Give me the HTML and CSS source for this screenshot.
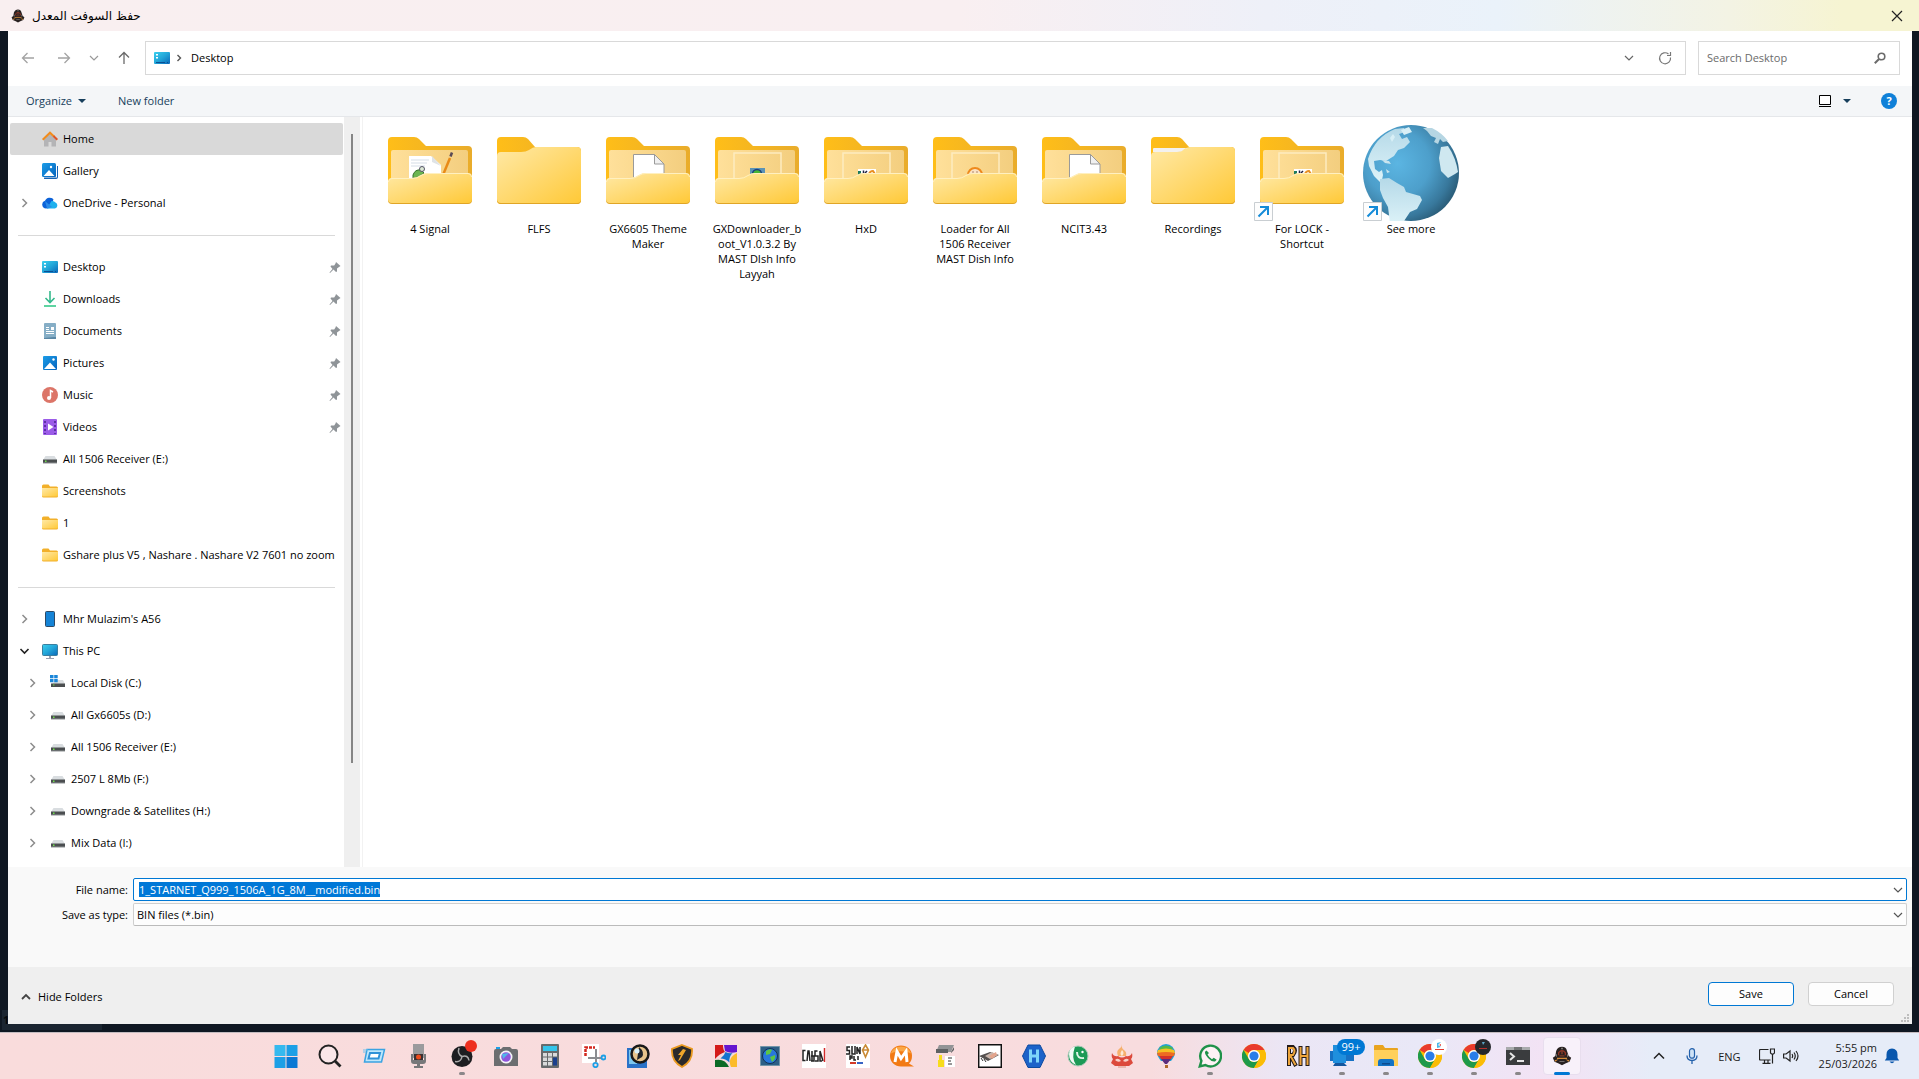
FILE: index.html
```html
<!DOCTYPE html>
<html lang="en">
<head>
<meta charset="utf-8">
<title>حفظ السوفت المعدل</title>
<link rel="stylesheet" href="styles.css">
</head>
<body>
<svg class="defs" aria-hidden="true">
  <defs>
    <linearGradient id="gFront" x1="0" y1="0" x2="1" y2="1"><stop offset="0" stop-color="#ffe9a6"/><stop offset=".5" stop-color="#ffd970"/><stop offset="1" stop-color="#ffc937"/></linearGradient>
    <linearGradient id="gPanel" x1="0" y1="0" x2="1" y2="0"><stop offset="0" stop-color="#ffe09a"/><stop offset="1" stop-color="#f3ce7f"/></linearGradient>
    <linearGradient id="gBack" x1="0" y1="0" x2="1" y2="0"><stop offset="0" stop-color="#ffbe18"/><stop offset="1" stop-color="#e9ac2b"/></linearGradient>
    <linearGradient id="gSky" x1="0" y1="0" x2="1" y2="1"><stop offset="0" stop-color="#3bd0ee"/><stop offset=".5" stop-color="#22a5d8"/><stop offset="1" stop-color="#0a66b8"/></linearGradient>
    <linearGradient id="gBlue" x1="0" y1="0" x2="1" y2="1"><stop offset="0" stop-color="#1b9de8"/><stop offset="1" stop-color="#0663bd"/></linearGradient>
    <radialGradient id="gOcean" cx=".36" cy=".4" r=".75"><stop offset="0" stop-color="#5bb5e2"/><stop offset=".45" stop-color="#4d9fcb"/><stop offset=".75" stop-color="#38789c"/><stop offset="1" stop-color="#20495f"/></radialGradient>
    <linearGradient id="gLand" x1="0" y1="0" x2="0" y2="1"><stop offset="0" stop-color="#b5d9e8"/><stop offset="1" stop-color="#dff4f9"/></linearGradient>
  </defs>
  <symbol id="folder-closed" viewBox="0 0 96 96">
    <path fill="url(#gBack)" d="M6 16q0-4 4-4h22q3 0 5 2l7 8h42q4 0 4 4v49q0 4-4 4H10q-4 0-4-4z"/>
    <path fill="#e0a526" d="M6 60h84v15q0 4-4 4H10q-4 0-4-4z"/>
    <path fill="url(#gFront)" d="M6 31q0-4 4-4h20q5 0 8-2 4-3 7-3h41q4 0 4 4v48q0 4-4 4H10q-4 0-4-4z"/>
  </symbol>
  <symbol id="folder-back" viewBox="0 0 96 96">
    <path fill="url(#gBack)" d="M6 16q0-4 4-4h22q3 0 5 2l7 7h42q4 0 4 4v40H6z"/>
    <path fill="url(#gPanel)" d="M9 27q0-2 2-2h73q2 0 2 2v30H9z"/>
  </symbol>
  <symbol id="folder-front" viewBox="0 0 96 96">
    <path fill="#e0a526" d="M6 65h84v10q0 4-4 4H10q-4 0-4-4z"/>
    <path fill="url(#gFront)" d="M6 57q0-4 4-4h20q5 0 9-3 3-2 7-2h40q4 0 4 4v22q0 4-4 4H10q-4 0-4-4z"/>
    <path fill="none" stroke="#fff0c0" d="M6.500 57q0-3.500 3.500-3.500h20q5 0 9-3 3-2 7-2h40q3.500 0 3.500 3.500"/>
  </symbol>
  <symbol id="sheet" viewBox="0 0 96 96"><path fill="#fff" stroke="#9a9a9a" d="M33.500 56V29.500h21l9.500 9.500v17z"/><path fill="#f0f0f0" stroke="#9a9a9a" d="M54.500 29.500v9.500h9.500z"/></symbol>
  <symbol id="frame" viewBox="0 0 96 96"><path fill="none" stroke="#fdecc0" stroke-width="1.500" d="M25 56V28h47v28"/></symbol>
  <symbol id="hx" viewBox="0 0 96 96"><path fill="#fff" d="M40 44h18v10H40z"/><path fill="#1c7a5c" d="M40 46h3v4h-3z"/><path fill="none" stroke="#224" stroke-width="1.500" d="M45.500 45.500v3M47 48l2-2"/><path fill="none" stroke="#e99022" stroke-width="2" d="M51 49q1-3 4-3l2 3"/></symbol>
  <symbol id="shortcut" viewBox="0 0 96 96"><path fill="#fdfdfd" stroke="#c9ced2" d="M.5 77.500h18v18H.5z"/><path fill="none" stroke="#148bd8" stroke-width="2" d="M4.500 91.500l9-9M6 82h8v8"/></symbol>
  <symbol id="i-folder" viewBox="0 0 16 16"><path fill="#f2b02a" d="M0 3q0-1.500 1.500-1.500h5l1.500 2h6.500q1.500 0 1.500 1.500v8q0 1.500-1.500 1.500h-13Q0 14.500 0 13z"/><path fill="url(#gFront)" d="M0 5h16v7.500q0 1-1.500 1h-13q-1.500 0-1.500-1z"/></symbol>
  <symbol id="i-drive" viewBox="0 0 16 16"><path fill="#d9dde0" d="M3.500 5h9L15 9H1z"/><path fill="#4b4e50" d="M1 8.500h14v3.500H1z"/><path fill="#8d9092" d="M1 11.500h14v1H1z"/><path fill="#6fe04a" d="M3 9.500h1.500v1.500H3z"/></symbol>
  <symbol id="i-desktop" viewBox="0 0 16 16"><rect y="2" width="16" height="12" rx="1" fill="url(#gSky)"/><path fill="#fff" d="M2 4h2v1.500H2zM2 7h2v1.500H2z"/><path fill="#0b4f94" d="M2 12h9v1H2zM13 12h1v1h-1z"/></symbol>
  <symbol id="i-pin" viewBox="0 0 12 12"><path fill="#8f9498" d="M7 1l4.500 4-1.500 1-2 1.500v3l-1 .5-2.500-2.500L1 12l-.5-.5L3.500 8 1.500 5.500 2 4.500h3.200L6.500 2.500z"/></symbol>
  <symbol id="i-right" viewBox="0 0 16 16"><path fill="none" stroke="#8c8c8c" stroke-width="1.500" d="M5.500 4l4 4-4 4"/></symbol>
  <symbol id="i-down" viewBox="0 0 16 16"><path fill="none" stroke="currentColor" stroke-width="1.200" d="M4 6l4 4 4-4"/></symbol>
  <symbol id="chrome" viewBox="0 0 24 24"><circle cx="12" cy="12" r="12" fill="#fbbc05"/><path fill="#e93b2d" d="M1.600 6A12 12 0 0 1 22.400 6H12a6 6 0 0 0-5.200 3z"/><path fill="#1e9a4a" d="M1.600 6A12 12 0 0 0 12 24l5.200-9A6 6 0 0 1 6.800 15z"/><path fill="#fbbc05" d="M22.400 6A12 12 0 0 1 12 24l5.200-9a6 6 0 0 0 0-6z"/><circle cx="12" cy="12" r="6" fill="#fff"/><circle cx="12" cy="12" r="4.600" fill="#2a7de8"/></symbol>
  <symbol id="crest" viewBox="0 0 24 24"><path fill="#282120" d="M12 1q5 0 6 5l2 6 3 2-2 5-5 2-4 2-4-2-5-2-2-5 3-2 1-6q2-5 7-5z"/><path fill="none" stroke="#933525" stroke-width="1.500" d="M8 11V8q4-5 8 0v3"/><path fill="#7a3a2a" d="M11 6h2v4h-2zM9 11h6v1.500H9z"/><path fill="#d18a39" d="M6 14h12v1.500H6zM3 17l5-1-4 3zM21 17l-5-1 4 3z"/><path fill="#8c8782" d="M9 18h6v1H9zM11 2h2v2h-2zM5 10h1v3H5zM18 10h1v3h-1z"/></symbol>
</svg>

<div class="desktop">
  <div class="ghost">1</div>
  <main class="dialog">
    <header class="titlebar">
      <svg class="i14"><use href="#crest"/></svg>
      <h1 class="title" dir="rtl" lang="ar">حفظ السوفت المعدل</h1>
      <button class="close" aria-label="Close"><svg viewBox="0 0 12 12"><path fill="none" stroke="#222" stroke-width="1.200" d="M1 1l10 10M11 1L1 11"/></svg></button>
    </header>

    <div class="window">
      <div class="navbar">
        <div class="history">
          <button aria-label="Back"><svg class="i16" viewBox="0 0 16 16"><path fill="none" stroke="#a3a3a3" stroke-width="1.300" d="M14 8H2.500M7.500 3l-5 5 5 5"/></svg></button>
          <button aria-label="Forward"><svg class="i16" viewBox="0 0 16 16"><path fill="none" stroke="#a3a3a3" stroke-width="1.300" d="M2 8h11.500M8.500 3l5 5-5 5"/></svg></button>
          <button class="recent" aria-label="Recent locations"><svg class="i16"><use href="#i-down"/></svg></button>
          <button aria-label="Up"><svg class="i16" viewBox="0 0 16 16"><path fill="none" stroke="#6a6a6a" stroke-width="1.300" d="M8 14V2.500M3 7.500l5-5 5 5"/></svg></button>
        </div>
        <div class="address">
          <svg class="i16"><use href="#i-desktop"/></svg>
          <svg class="crumb" viewBox="0 0 8 8"><path fill="none" stroke="#555" stroke-width="1.400" d="M2.500 1l3 3-3 3"/></svg>
          <a href="#" class="place">Desktop</a>
          <button class="history-list" aria-label="Previous locations"><svg class="i16"><use href="#i-down"/></svg></button>
          <button aria-label="Refresh"><svg class="i16" viewBox="0 0 16 16"><path fill="none" stroke="#777" stroke-width="1.200" d="M13.500 7.500A5.500 5.500 0 1 1 11.500 4M13.500 2v3.500H10"/></svg></button>
        </div>
        <div class="search">
          <input type="search" placeholder="Search Desktop" aria-label="Search Desktop">
          <svg class="i12" viewBox="0 0 12 12"><circle cx="7.500" cy="4.500" r="3.300" fill="none" stroke="#6b6b6b" stroke-width="1.600"/><path stroke="#6b6b6b" stroke-width="2" d="M5 7L.8 11.200"/></svg>
        </div>
      </div>

      <div class="commands">
        <button class="organize">Organize <svg class="caret" viewBox="0 0 8 4"><path fill="#173f5c" d="M0 0h8L4 4z"/></svg></button>
        <button>New folder</button>
        <button class="view" aria-label="Change your view"><svg class="i14" viewBox="0 0 14 14"><path fill="#fff" stroke="#000" d="M1.500 1.500h11v9h-11z"/><path stroke="#000" d="M1 12.500h12"/></svg><svg class="caret" viewBox="0 0 8 4"><path fill="#173f5c" d="M0 0h8L4 4z"/></svg></button>
        <button class="help" aria-label="Get help">?</button>
      </div>

      <div class="body">
        <nav class="tree" aria-label="Folders">
          <ul>
            <li><a href="#" class="row selected"><i></i><svg class="i16" viewBox="0 0 16 16"><path fill="#b4b4b6" d="M2 8l6-5.500L14 8v7.500H9.500V11h-3v4.500H2z"/><path fill="none" stroke="#f28c1c" stroke-width="2" d="M.7 8.700L8 1.700l4 3.800"/><path fill="none" stroke="#e05526" stroke-width="2" d="M11.500 5l3.800 3.700"/></svg>Home</a></li>
            <li><a href="#" class="row"><i></i><svg class="i16" viewBox="0 0 16 16"><path fill="#1663b5" d="M3 3h13v11q0 2-2 2H2z"/><path fill="#fff" d="M14 1h1v13.500H1v-1h13z"/><rect width="14" height="14" rx="1.500" fill="url(#gBlue)"/><path fill="#fff" d="M1.500 13L7 7l5.500 6z"/><circle cx="9" cy="4" r="1.200" fill="#fff"/></svg>Gallery</a></li>
            <li><a href="#" class="row"><svg class="i16"><use href="#i-right"/></svg><svg class="i16" viewBox="0 0 16 16"><path fill="#0c62d8" d="M4 13.500a4 4 0 0 1-1-7.800 5 5 0 0 1 8.500-1.200L8 13z"/><path fill="#1fb1ee" d="M5 13.500L9.500 6a4 4 0 0 1 4 1.500 3.200 3.200 0 0 1-.5 6z"/><path fill="#2a8be8" d="M3 6l7 6-5 1.500z"/></svg>OneDrive - Personal</a></li>
            <li class="rule"><hr></li>
            <li><a href="#" class="row"><i></i><svg class="i16"><use href="#i-desktop"/></svg>Desktop<svg class="pin"><use href="#i-pin"/></svg></a></li>
            <li><a href="#" class="row"><i></i><svg class="i16" viewBox="0 0 16 16"><path fill="none" stroke="#35b98c" stroke-width="1.600" d="M8 0v11.500M3.500 7L8 11.500 12.500 7"/><path stroke="#35c98a" stroke-width="1.600" d="M2 15h12"/></svg>Downloads<svg class="pin"><use href="#i-pin"/></svg></a></li>
            <li><a href="#" class="row"><i></i><svg class="i16" viewBox="0 0 16 16"><rect x="2" width="12" height="16" rx="1" fill="#86aec6"/><path fill="#5a87a5" d="M12 14h2v2H2v-1z"/><path stroke="#fff" d="M4 4.500h3M4 6.500h3M4 8.500h8M4 10.500h8"/><path fill="#fff" d="M9 4h3v3H9z"/></svg>Documents<svg class="pin"><use href="#i-pin"/></svg></a></li>
            <li><a href="#" class="row"><i></i><svg class="i16" viewBox="0 0 16 16"><rect x="1" y="1" width="14" height="14" rx="1" fill="url(#gBlue)"/><path fill="#fff" d="M2 14l6-6.500L14 14z"/><circle cx="11.500" cy="4.500" r="1.200" fill="#fff"/></svg>Pictures<svg class="pin"><use href="#i-pin"/></svg></a></li>
            <li><a href="#" class="row"><i></i><svg class="i16" viewBox="0 0 16 16"><circle cx="8" cy="8" r="8" fill="#dc7568"/><circle cx="7" cy="11" r="2" fill="#fff"/><path fill="none" stroke="#fff" stroke-width="1.500" d="M8.500 11V3.500L11 5"/></svg>Music<svg class="pin"><use href="#i-pin"/></svg></a></li>
            <li><a href="#" class="row"><i></i><svg class="i16" viewBox="0 0 16 16"><rect x="1" width="14" height="16" rx="1" fill="#9b5ce8"/><path fill="#fff" d="M6 4.500v7L11.500 8z"/><path stroke="#4b2290" stroke-width="1.500" stroke-dasharray="2 2" d="M3 2v13M13 2v13"/></svg>Videos<svg class="pin"><use href="#i-pin"/></svg></a></li>
            <li><a href="#" class="row"><i></i><svg class="i16"><use href="#i-drive"/></svg>All 1506 Receiver (E:)</a></li>
            <li><a href="#" class="row"><i></i><svg class="i16"><use href="#i-folder"/></svg>Screenshots</a></li>
            <li><a href="#" class="row"><i></i><svg class="i16"><use href="#i-folder"/></svg>1</a></li>
            <li><a href="#" class="row"><i></i><svg class="i16"><use href="#i-folder"/></svg>Gshare plus V5 , Nashare . Nashare V2 7601 no zoom</a></li>
            <li class="rule"><hr></li>
            <li><a href="#" class="row"><svg class="i16"><use href="#i-right"/></svg><svg class="i16" viewBox="0 0 16 16"><rect x="3.500" y=".5" width="9" height="15" rx="1" fill="#1583d6" stroke="#2d4a66"/></svg>Mhr Mulazim's A56</a></li>
            <li><a href="#" class="row"><svg class="i16" viewBox="0 0 16 16"><path fill="none" stroke="#222" stroke-width="1.600" d="M3.500 6l4 4 4-4"/></svg><svg class="i16" viewBox="0 0 16 16"><rect x=".5" y="1.500" width="15" height="11" rx="1" fill="url(#gSky)" stroke="#3a7f9f"/><path fill="#9a9fb0" d="M7 13h2v2h3v1H4v-1h3z"/></svg>This PC</a></li>
            <li><a href="#" class="row sub"><svg class="i16"><use href="#i-right"/></svg><svg class="i16" viewBox="0 0 16 16"><path fill="#d9dde0" d="M6 5h7l2 4H2z"/><path fill="#4b4e50" d="M1 8.500h14v3.500H1z"/><path fill="#6fe04a" d="M3 9.500h1.500v1H3z"/><path fill="#1a86d9" d="M0 0h3.500v3.300H0zM4.200 0h3.500v3.300H4.200zM0 4h3.500v3.300H0zM4.200 4h3.500v3.300H4.200z"/></svg>Local Disk (C:)</a></li>
            <li><a href="#" class="row sub"><svg class="i16"><use href="#i-right"/></svg><svg class="i16"><use href="#i-drive"/></svg>All Gx6605s (D:)</a></li>
            <li><a href="#" class="row sub"><svg class="i16"><use href="#i-right"/></svg><svg class="i16"><use href="#i-drive"/></svg>All 1506 Receiver (E:)</a></li>
            <li><a href="#" class="row sub"><svg class="i16"><use href="#i-right"/></svg><svg class="i16"><use href="#i-drive"/></svg>2507 L 8Mb (F:)</a></li>
            <li><a href="#" class="row sub"><svg class="i16"><use href="#i-right"/></svg><svg class="i16"><use href="#i-drive"/></svg>Downgrade &amp; Satellites (H:)</a></li>
            <li><a href="#" class="row sub"><svg class="i16"><use href="#i-right"/></svg><svg class="i16"><use href="#i-drive"/></svg>Mix Data (I:)</a></li>
          </ul>
        </nav>
        <div class="track"><div class="thumb"></div></div>
        <section class="files" aria-label="Files">
          <a href="#" class="file"><svg viewBox="0 0 96 96"><use href="#folder-back"/><path fill="#fff" d="M27 31h22l10 9v14H27z"/><path fill="#dfe3e6" d="M50 31l9 10-9-4z"/><path stroke="#d5dde6" d="M29 35h18M29 38h16M29 41h14"/><path fill="#6cb552" stroke="#34702c" d="M31 50q2-6 8-5l3 3-5 4-6 1z"/><circle cx="40" cy="44" r="2.500" fill="#dce8d5" stroke="#556"/><path stroke="#e88a17" stroke-width="2.500" d="M61 50l7-17"/><path stroke="#5a4a55" stroke-width="2.500" d="M68.500 31.500l1.500-4"/><use href="#folder-front"/></svg><span>4 Signal</span></a>
          <a href="#" class="file"><svg><use href="#folder-closed"/></svg><span>FLFS</span></a>
          <a href="#" class="file"><svg viewBox="0 0 96 96"><use href="#folder-back"/><use href="#sheet"/><use href="#folder-front"/></svg><span>GX6605 Theme<br>Maker</span></a>
          <a href="#" class="file"><svg viewBox="0 0 96 96"><use href="#folder-back"/><use href="#frame"/><path fill="#5b93b5" d="M41 43h15v9H41z"/><circle cx="48" cy="49" r="4.500" fill="#47b536" stroke="#1c3f80" stroke-width="1.500"/><use href="#folder-front"/></svg><span>GXDownloader_b<br>oot_V1.0.3.2 By<br>MAST DIsh Info<br>Layyah</span></a>
          <a href="#" class="file"><svg viewBox="0 0 96 96"><use href="#folder-back"/><use href="#frame"/><use href="#hx"/><use href="#folder-front"/></svg><span>HxD</span></a>
          <a href="#" class="file"><svg viewBox="0 0 96 96"><use href="#folder-back"/><use href="#frame"/><circle cx="48" cy="50" r="7" fill="#fbe3c5" stroke="#ee8a1d" stroke-width="2"/><path stroke="#c9a68a" stroke-width="1.500" d="M46 46v5M50 46v5"/><use href="#folder-front"/></svg><span>Loader for All<br>1506 Receiver<br>MAST Dish Info</span></a>
          <a href="#" class="file"><svg viewBox="0 0 96 96"><use href="#folder-back"/><use href="#sheet"/><use href="#folder-front"/></svg><span>NCIT3.43</span></a>
          <a href="#" class="file"><svg viewBox="0 0 96 96"><use href="#folder-closed"/><path fill="#f3f1ef" d="M8 24q0-1 1-1h34q-3 0-6 3-2 1-5 1H8z"/></svg><span>Recordings</span></a>
          <a href="#" class="file"><svg viewBox="0 0 96 96"><use href="#folder-back"/><use href="#frame"/><use href="#hx"/><use href="#folder-front"/><use href="#shortcut"/></svg><span>For LOCK -<br>Shortcut</span></a>
          <a href="#" class="file"><svg viewBox="0 0 96 96"><circle cx="48" cy="48" r="48" fill="url(#gOcean)"/><path fill="url(#gLand)" d="M5 34Q12 12 32 4l9-1 1 4-6 2 3 5 5-2 3 5-6 6-6 2-4 6-8 5-6-1-6 1 1 8 4 3 3-2 1 5-1 5 3 4-4-1-7-7-5-10z"/><path fill="#d8eff6" d="M27 13l3-4 2 3-3 5zM38 5l8-3 3 5-8 3z"/><path fill="#c8e4ee" d="M19 35l7 1 2 3-6-1zM23 44l4 3-3 1z"/><path fill="url(#gLand)" d="M17 54l9-1 8 5 7 4 2 5 14 4 2 4-5 9-7 3-6 9-2 6q-8-1-12-4l-2-16-5-9-3-8z"/><path fill="#b6d6e3" d="M60 3l9 0q10 5 16 13l-5 1-3-3-2 5-4-2 2-4-5-2-4-5z"/><path fill="#cfe8f0" d="M78 22l7-1q8 12 10 26l-3 2-7 4-7-7-2-13z"/><use href="#shortcut"/></svg><span>See more</span></a>
        </section>
      </div>

      <form class="fields" onsubmit="return false">
        <label for="fname">File name:</label>
        <div class="combo active"><input id="fname" type="text" value="1_STARNET_Q999_1506A_1G_8M__modified.bin"><button type="button" aria-label="Recent names"><svg class="i16"><use href="#i-down"/></svg></button></div>
        <label for="ftype">Save as type:</label>
        <div class="combo"><select id="ftype"><option>BIN files (*.bin)</option></select><svg class="i16"><use href="#i-down"/></svg></div>
      </form>

      <footer class="actions">
        <button class="hide"><svg class="i14" viewBox="0 0 14 14"><path fill="none" stroke="#444" stroke-width="1.800" d="M4 9l4-4 4 4"/></svg>Hide Folders</button>
        <button class="btn primary">Save</button>
        <button class="btn">Cancel</button>
        <svg class="grip" viewBox="0 0 9 9"><path fill="#bdbdbd" d="M6 0h2v2H6zM3 3h2v2H3zM6 3h2v2H6zM0 6h2v2H0zM3 6h2v2H3zM6 6h2v2H6z"/></svg>
      </footer>
    </div>
  </main>

  <footer class="taskbar">
    <div class="apps">
      <button aria-label="Start"><svg viewBox="0 0 24 24"><path fill="#35b9ee" d="M.5 1h11v11H.5z"/><path fill="#1c9fe6" d="M12.500 1h11v11h-11zM.5 13h11v11H.5z"/><path fill="#0a78d4" d="M12.500 13h11v11h-11z"/></svg></button>
      <button aria-label="Search"><svg viewBox="0 0 24 24"><circle cx="10.500" cy="10.500" r="9" fill="#fae6e8" stroke="#222" stroke-width="2"/><path stroke="#222" stroke-width="2.800" d="M16.500 16.500l6 6"/></svg></button>
      <button aria-label="Run"><svg viewBox="0 0 24 24"><path fill="#bfe7fb" stroke="#3aa3e2" stroke-width="1.500" d="M5 5.500h17.500L19.500 18H2.500z"/><path fill="#fff" stroke="#2f92d8" stroke-width="2" d="M8 9h10l-1.500 5.500h-10z"/><path stroke="#6cc1ee" d="M1 6h5M1 8h3"/></svg></button>
      <button aria-label="Voice recorder"><svg viewBox="0 0 24 24"><rect x="7" width="11" height="14" fill="#9b9b9d"/><path fill="#77787a" d="M5 10h2v6h11v-6h2v7q0 3-3 3H8q-3 0-3-3zM11 19h3v3h3v2H8v-2h3z"/><rect x="8" y="10" width="9" height="6" fill="#3b3032"/><circle cx="12.500" cy="13" r="2.500" fill="#ee4b1c"/></svg></button>
      <button class="running" aria-label="OBS Studio"><svg viewBox="0 0 24 24"><circle cx="12" cy="12.500" r="10.500" fill="#1d1e21"/><path fill="none" stroke="#aaa" stroke-width="1.500" d="M9 4q-2 6 3 8.500M12 12.500q6-2 7 4M12 12.500q-1 6-7 5"/></svg><span class="dot"></span></button>
      <button aria-label="Camera"><svg viewBox="0 0 24 24"><path fill="#6c6e70" d="M0 7q0-2 2-2h5l2-2h7l2 2h4q2 0 2 2v15H0z"/><path fill="#1c9fe6" d="M2 3h4v2H2z"/><circle cx="12" cy="13" r="6.500" fill="#f4f4f8"/><circle cx="12" cy="13" r="4.800" fill="#8f55dc"/><path fill="#4fb7ea" d="M8 10l7-1-6 6z"/></svg></button>
      <button aria-label="Calculator"><svg viewBox="0 0 24 24"><rect x="3" width="18" height="24" rx="1" fill="#676a6c"/><path fill="#35c4ea" d="M5 2h14v5H5z"/><path fill="#d9dadb" d="M5 9h4v3.500H5zM10 9h4v3.500h-4zM15 9h4v3.500h-4zM5 13.500h4V17H5zM10 13.500h4V17h-4zM5 18h4v3.500H5zM10 18h4v3.500h-4z"/><path fill="#1a3f8c" d="M15 13.500h4v8h-4z"/></svg></button>
      <button aria-label="Snipping tool"><svg viewBox="0 0 24 24"><path fill="#fff" d="M0 0h17v19H0z"/><path fill="none" stroke="#d3261d" stroke-width="2.500" stroke-dasharray="3 1" d="M3.500 12V3.500H13"/><path fill="none" stroke="#8b8c90" stroke-width="2" d="M14 5v13M6 14h14"/><circle cx="21.500" cy="13.500" r="2" fill="none" stroke="#1c9fe6" stroke-width="1.800"/><circle cx="13.500" cy="21" r="2.200" fill="none" stroke="#1c9fe6" stroke-width="1.800"/></svg></button>
      <button aria-label="Image viewer"><svg viewBox="0 0 24 24"><path fill="#2a72c8" d="M1 4h20v20H1z"/><path fill="#7cc7ef" d="M3 6h8v14H3z"/><circle cx="14" cy="10" r="8.500" fill="#e7c48c" stroke="#191919" stroke-width="2.500"/><path fill="#20242a" d="M13 3q6 5 3 10l-5 3z"/><circle cx="11" cy="7" r="2.500" fill="#d8f0fa"/></svg></button>
      <button aria-label="Shield tool"><svg viewBox="0 0 24 24"><path fill="#2b2a2b" stroke="#e9991f" stroke-width="1.800" d="M12 1l10 4q1 12-10 18Q1 17 2 5z"/><path fill="#f0a62a" d="M13 5l3 1-6 10-2 1 3-6H8z"/></svg></button>
      <button aria-label="Colour tool"><svg viewBox="0 0 24 24"><path fill="#f3d9dc" d="M1 1h22v22H1z"/><path fill="#d41a1a" d="M1 1h8q0 5 2 7-6 2-10 7z"/><path fill="#6515cf" d="M10 1h13v7q-7 2-12-1z"/><path fill="#fcbb2a" d="M23 9v14h-6q-4-9 6-14z"/><path fill="#0b6a26" d="M1 16q10-2 14 7H1z"/><path fill="#1373cf" d="M11.500 8q4 2 7 1-4 4-3 9.500-4-4-9-4 4-3 5-6.500z"/></svg></button>
      <button aria-label="Network globe"><svg viewBox="0 0 24 24"><path fill="#2d5f86" stroke="#7295a8" d="M2.500 2.500h19v19h-19z"/><circle cx="12" cy="12" r="7.500" fill="#2878dc" stroke="#123257"/><path fill="#5cc645" d="M8 7q4-3 6-1l-2 4-4 1zM12 13l5-2q1 4-3 7z"/></svg></button>
      <button aria-label="Cascon"><svg viewBox="0 0 24 24"><path fill="#fff" d="M0 0h24v24H0z"/><path fill="none" stroke="#222" stroke-width="1.500" d="M3.500 6.500H1v10h2.500M5 17l1-10h1l1 10M10 7v10M9 12h3v5H9M15.500 7H13v5h3v5h-3M18 7v10h2M18 7l3 10"/><path stroke="#d32a2a" stroke-width="1.500" d="M22.500 4v14"/></svg></button>
      <button aria-label="Sunplus"><svg viewBox="0 0 24 24"><path fill="#fff" d="M0 0h24v24H0z"/><path fill="none" stroke="#222" stroke-width="1.500" d="M4 3H1v3.500h2.500V10H0M6 2v8h3V2M11 10V3l3 7V3M4 16v-4h2v2H4M8 12v4h2M12 12v4"/><path fill="none" stroke="#ca8a35" stroke-width="1.600" d="M19.500 1l3 5-3 7-3-7zM16 6h7"/><path fill="#d43a28" d="M4 18h6v2H4z"/><path fill="#3763c4" d="M11 18h6v2h-6z"/></svg></button>
      <button aria-label="M tool"><svg viewBox="0 0 24 24"><path fill="#f27a14" d="M11 1.500c6 0 11 4 11 10 0 4-1 6-3 8l5 3H11C5 22.500 0 18 0 12S5 1.500 11 1.500z"/><path fill="#fba746" d="M11 2.500c5 0 9 3 10 7-6-3-14-3-20 0 1-4 5-7 10-7z"/><path fill="none" stroke="#fff" stroke-width="3" d="M5 18L7 7.500l4 7 5-7 1 10.500"/></svg></button>
      <button aria-label="Unlocker"><svg viewBox="0 0 24 24"><path fill="#929496" d="M5 1h15l-3 7H2z"/><path fill="#5f6163" d="M2 5h12v4H2zM17 8l3-5v3l-3 3z"/><path fill="#fff" d="M11 12h10v11H11z"/><path stroke="#333" d="M14 14h4M14 17h3M14 20h4"/><path fill="#f7dc1b" d="M4 16h6v7H4zM5 11h3v5H5z"/></svg></button>
      <button aria-label="Chip tool"><svg viewBox="0 0 24 24"><path fill="#fff" stroke="#111" stroke-width="1.500" d="M.7.700h22.600v22.600H.7z"/><path fill="#54504f" d="M1 12l11-4 9 3-11 6z"/><path fill="#c8b5ac" d="M7 12l7-4 6 3-8 4z"/><path fill="#e3a58d" d="M11 12l7-4 1 3-5 4z"/><path stroke="#333" d="M3 14l2 3M6 15l2 3"/></svg></button>
      <button aria-label="H tool"><svg viewBox="0 0 24 24"><path fill="#1c62c9" stroke="#0d4a9e" d="M6 1h12l5.500 11L18 23.500H6L.5 12z"/><path stroke="#7fd5fa" stroke-width="3" d="M8.500 5.500v13M15.500 5.500v13M8 12h8"/></svg></button>
      <button aria-label="Crescent"><svg viewBox="0 0 24 24"><circle cx="12" cy="12" r="10" fill="#1c9a56" stroke="#a9c9b8"/><path fill="#f2faf5" d="M3 10q0-6 6-7.500Q5 14 10 21 3 18 3 10z"/><path fill="none" stroke="#dff5e7" stroke-width="2" d="M11 8q0 7 7 6"/><circle cx="16.500" cy="8" r="1.200" fill="#fff"/></svg></button>
      <button aria-label="Burner"><svg viewBox="0 0 24 24"><path fill="#f6b06c" d="M12 0q-1 4 2 6t2 6H8q-2-5 1-7t3-5z"/><path fill="#fce9d4" d="M12 6q3 3 0 6-3-2 0-6z"/><path fill="#dc4a3c" d="M2 9q2 4 6 3 4 3 8 0 4 1 6-3 1 4-1 6l2 4-4 3H5l-4-3 2-4q-2-2-1-6z"/><path fill="#f8d2ca" d="M5 16q3-3 6 1-3 2-6-1zM19 16q-3-3-6 1 3 2 6-1z"/><path fill="#e9b9b0" d="M8 22h8v2H8z"/></svg></button>
      <button aria-label="Balloon"><svg viewBox="0 0 24 24"><path fill="#1fa3d8" d="M12 0a9 9 0 0 1 9 9q0 3-4 8H7Q3 12 3 9a9 9 0 0 1 9-9z"/><path fill="#57b947" d="M5 4q7-5 14 0l-2 2H7z"/><path fill="#f6c022" d="M4 6q8-3 16 0l1 3H3z"/><path fill="#ee6a22" d="M3 9q9-2 18 0l-1 3H4z"/><path fill="#d4312a" d="M5 12h14l-2 3H7z"/><path fill="#5a2c7e" d="M7 15h10l-4 5h-2z"/><path fill="#b0682b" d="M11 21h3v3h-3z"/></svg></button>
      <button class="running" aria-label="WhatsApp"><svg viewBox="0 0 24 24"><path fill="#fdf2f4" stroke="#1f9249" stroke-width="2.400" d="M1.800 22.300l1.600-5.500A10.400 10.400 0 1 1 7.400 21z"/><path fill="#1f9249" d="M8.500 6.500L7 7.800Q6.500 10 10 14t7 3.500l1.700-1.800-3-2-1.700 1.500Q11 13.500 9.500 10.500L11 9z"/></svg></button>
      <button aria-label="Chrome"><svg><use href="#chrome"/></svg></button>
      <button aria-label="RH tool"><svg viewBox="0 0 24 24"><path fill="none" stroke="#221b1b" stroke-width="4" d="M3 22V3h4q4 3 0 8H4l6 11M14.500 22V2M21.500 22V2M14 12h7"/><path fill="none" stroke="#eda53c" stroke-width="2" d="M3 21V4h4q3 3 0 7H4l5.500 10M14.500 21V3M21.500 21V3M14 12h7"/></svg></button>
      <button class="running" aria-label="Remote desktop"><svg viewBox="0 0 24 24"><path fill="#1671c4" d="M0 7h24v10H0z"/><path fill="#1f8fdd" d="M3 1h13v18H3z"/><path fill="#14579f" d="M5 19h9l3 3H3z"/></svg><span class="badge">99+</span></button>
      <button class="running" aria-label="File Explorer"><svg viewBox="0 0 24 24"><path fill="#e9a41f" d="M0 2q0-1 1-1h8l2 3h12q1 0 1 1v6H0z"/><path fill="#ffd05b" d="M0 6h24v16H0z"/><path fill="#1473c4" d="M4 22v-4q0-3 3-3h10q3 0 3 3v4z"/><path fill="#0c4b8f" d="M8 19h8v1.500H8z"/></svg></button>
      <button class="running" aria-label="Chrome, profile one"><svg><use href="#chrome"/></svg><span class="avatar"><svg viewBox="0 0 16 16"><path fill="#4bb7e8" d="M6 4l4-1-3 3 3 2-4 1z"/><path fill="#e33a30" d="M4 10h9v1H4zM8 6l2-1v2z"/></svg></span></button>
      <button class="running" aria-label="Chrome, profile two"><svg><use href="#chrome"/></svg><span class="avatar dark"><svg viewBox="0 0 16 16"><path fill="#5aa6c8" d="M7 3h3L8 6z"/><path fill="#b3312c" d="M4 9h8v1H4z"/></svg></span></button>
      <button class="running" aria-label="Terminal"><svg viewBox="0 0 24 24"><path fill="#3a3c3e" d="M0 3h24v18H0z"/><path fill="#a9abad" d="M0 3h24v3H0z"/><path fill="#747678" d="M8 3h8v3H8z"/><path fill="none" stroke="#e6e6e6" stroke-width="2" d="M4 9l4 3.500L4 16M11 17h7"/></svg></button>
      <button class="running current" aria-label="Receiver tool"><svg><use href="#crest"/></svg></button>
    </div>
    <div class="tray">
      <button aria-label="Show hidden icons"><svg class="i16" viewBox="0 0 16 16"><path fill="none" stroke="#222" stroke-width="1.500" d="M3 10.500l5-5 5 5"/></svg></button>
      <button class="mic" aria-label="Microphone"><svg class="i16" viewBox="0 0 16 16"><rect x="5.500" y=".7" width="5" height="9.500" rx="2.500" fill="#cfe2f6" stroke="#2461ab" stroke-width="1.200"/><path fill="none" stroke="#2461ab" stroke-width="1.300" d="M3 7.500q0 5 5 5t5-5M8 12.500V16"/></svg></button>
      <span class="lang">ENG</span>
      <button class="sound" aria-label="Network and volume"><svg class="i16" viewBox="0 0 16 16"><path fill="none" stroke="#222" stroke-width="1.200" d="M9.500 1.500H1.500q-1 0-1 1V11q0 1 1 1h10M5.500 12v3M9 12v3M3.500 15.400h8M11.500 1h4v4l-1 1h-2l-1-1zM13.500 6v9.500"/></svg><svg class="i16" viewBox="0 0 16 16"><path fill="none" stroke="#222" stroke-width="1.200" d="M.6 6h2.500L7 3v10L3.100 10H.6zM9 6q1.300 2 0 4M11 4.500q2.500 3.500 0 7M13 3q4 5 0 10"/></svg></button>
      <time class="clock" datetime="2026-03-25T17:55">5:55 pm<br>25/03/2026</time>
      <button aria-label="Notifications"><svg class="i16" viewBox="0 0 16 16"><path fill="#0a57ad" d="M8 .5q5.500.5 5.500 6V10l1.700 2.500H.8L2.500 10V6.500q0-5.500 5.500-6zM5.500 13.500h5q-2.500 3.500-5 0z"/></svg></button>
    </div>
  </footer>
</div>
</body>
</html>
```

FILE: styles.css
```css
* { box-sizing: border-box; }

body {
  margin: 0;
  font: 11px/15px "Open Sans", "DejaVu Sans", sans-serif;
  font-variant-ligatures: none;
  color: #000;
}

button, input, select { font: inherit; color: inherit; font-variant-ligatures: inherit; }
button { display: flex; align-items: center; justify-content: center; padding: 0; border: 0; background: none; }
a { color: inherit; text-decoration: none; }
svg { display: block; flex: none; }

.defs { position: absolute; width: 0; height: 0; }
.i16 { width: 16px; height: 16px; }
.i14 { width: 14px; height: 14px; }
.i12 { width: 12px; height: 12px; }

.desktop {
  position: relative;
  display: flex;
  flex-direction: column;
  min-height: 100vh;
  background: #0f1722;
}
.ghost {
  position: absolute;
  left: 2px;
  bottom: 49px;
  width: 100px;
  height: 20px;
  padding: 2px 1px;
  background: #1b2531;
  color: #05080c;
  font-weight: 700;
}

.dialog { position: relative; flex: 1; display: flex; flex-direction: column; padding-bottom: 8px; }

.titlebar {
  display: flex;
  align-items: center;
  gap: 7px;
  height: 31px;
  padding: 0 16px 0 11px;
  background: linear-gradient(90deg, #f9eff0 0%, #f9eff1 50%, #eef0f8 66%, #eaf2fa 78%, #f3f3e4 90%, #f6f4d2 96%);
}
.title { margin: 0; font: 12px/16px "DejaVu Sans", sans-serif; }
.close { margin-left: auto; }
.close svg { width: 12px; height: 12px; }

.window { flex: 1; display: flex; flex-direction: column; margin: 0 7px 0 8px; background: #fff; }

.navbar { display: flex; align-items: center; gap: 12px; height: 55px; padding: 0 12px 1px; line-height: 14px; }
.history { display: flex; align-items: center; gap: 20px; width: 113px; }
.recent { margin: 0 -6px; color: #999; }
.address { flex: 1; display: flex; align-items: center; height: 34px; padding: 0 12px 0 8px; border: 1px solid #d9d9d9; color: #000; }
.crumb { width: 8px; height: 8px; margin: 0 8px 0 5px; }
.place { flex: 1; }
.address button { color: #666; margin-left: 20px; }
.search { display: flex; align-items: center; width: 202px; height: 34px; padding: 0 13px 0 8px; border: 1px solid #d9d9d9; }
.search input { flex: 1; min-width: 0; height: 16px; padding: 0 0 2px; border: 0; outline: 0; background: none; }
.search input::placeholder { color: #6b6b6b; opacity: 1; }

.commands {
  display: flex;
  align-items: center;
  gap: 32px;
  height: 31px;
  padding: 0 15px 0 18px;
  background: #f4f6f8;
  border-bottom: 1px solid #e5e7ea;
  color: #173f5c;
  line-height: 14px;
}
.caret { width: 8px; height: 4px; }
.organize { gap: 6px; }
.view { gap: 11px; margin-left: auto; }
.help { width: 16px; height: 16px; border-radius: 50%; background: #0f80d8; color: #fff; font-weight: 700; }
.view + .help { margin-left: -2px; }

.body { flex: 1; display: flex; }
.tree { width: 336px; padding: 6px 1px 8px 2px; }
.tree ul { margin: 0; padding: 0; list-style: none; }
.row { display: flex; align-items: center; gap: 5px; height: 32px; padding: 0 2px 0 7px; border-radius: 2px; line-height: 14px; white-space: nowrap; }
.row > :first-child { flex: none; width: 16px; margin-right: 4px; }
.row.sub { padding-left: 15px; }
.selected { background: #d9d9d9; }
.pin { width: 12px; height: 12px; margin-left: auto; }
.rule { display: flex; align-items: center; height: 32px; padding: 0 8px; }
.rule hr { flex: 1; margin: 0; border: 0; border-top: 1px solid #d9d9d9; }
.track { width: 16px; padding: 17px 7px 104px; background: #efefef; display: flex; }
.thumb { width: 2px; background: #858585; }

.files {
  flex: 1;
  display: grid;
  grid-template-columns: repeat(auto-fill, 109px);
  align-content: start;
  margin-left: 2px;
  padding: 8px 12px;
  border-left: 1px solid #f2f2f2;
}
.file { display: flex; flex-direction: column; align-items: center; padding-left: 1px; text-align: center; }
.file svg { width: 96px; height: 96px; }

.fields {
  display: grid;
  grid-template-columns: 120px 1fr;
  gap: 2px 5px;
  align-content: start;
  height: 100px;
  padding: 11px 5px 0 0;
  background: #f9f9f9;
}
.fields label { text-align: right; line-height: 23px; }
.combo { position: relative; display: flex; align-items: center; justify-content: space-between; height: 23px; padding: 0 0 0 5px; border: 1px solid #cfcfcf; border-bottom-color: #bbb; border-radius: 2px; background: #fdfdfd; color: #555; }
.combo.active { border-color: #0078d4; background: #fff; }
.combo input { field-sizing: content; height: 15px; padding: 0; border: 0; outline: 0; background: #0078d7; color: #fff; }
.combo button { width: 16px; }
.combo select { position: absolute; inset: 0; width: 100%; padding: 0 3px; border: 0; outline: 0; appearance: none; background: none; color: #000; }
.combo > svg { margin-left: auto; }

.actions { position: relative; display: flex; align-items: center; gap: 14px; height: 57px; padding: 0 18px 3px 10px; background: #efefef; }
.hide { gap: 6px; margin-right: auto; padding-top: 5px; }
.btn { width: 86px; height: 24px; border: 1px solid #d0d0d0; border-radius: 4px; background: #fdfdfd; line-height: 14px; }
.btn.primary { border-color: #0078d4; }
.grip { position: absolute; right: 2px; bottom: 1px; width: 9px; height: 9px; }

.taskbar {
  position: relative;
  z-index: 0;
  display: flex;
  justify-content: space-between;
  height: 47px;
  padding: 0 19px 0 264px;
  border-top: 1px solid #c4bcc0;
  background: linear-gradient(90deg, #f9dcdc 0%, #f8dcde 60%, #ebe6f5 67%, #e9e8f7 74%, #f3e2f4 81%, #e6ecf8 86%, #e6ecf8 100%);
}
.apps { display: flex; }
.apps button { position: relative; width: 44px; height: 46px; }
.apps button > svg { width: 24px; height: 24px; }
.running::after { content: ""; position: absolute; bottom: 4px; left: 19px; width: 6px; height: 3px; border-radius: 2px; background: #8a8789; }
.current::before { content: ""; position: absolute; z-index: -1; inset: 4px 3px 4px 3px; border: 1px solid #e8deee; border-radius: 4px; background: #f8f1fa; }
.current::after { left: 14px; width: 16px; background: #0078d4; }
.current > svg { padding: 2px; }
.dot { position: absolute; top: 7px; right: 7px; width: 12px; height: 12px; border-radius: 50%; background: #ee2f1f; }
.badge { position: absolute; top: 6px; left: 17px; width: 28px; height: 16px; border-radius: 8px; background: #0078d4; color: #fff; line-height: 16px; }
.avatar { position: absolute; top: 6px; left: 23px; width: 16px; height: 16px; border-radius: 50%; background: #fff; }
.avatar.dark { background: #25272b; }

.tray { display: flex; align-items: center; color: #1b1b1b; }
.mic { margin: 0 18px 0 17px; }
.sound { gap: 8px; margin: 0 20px 0 18px; }
.clock { line-height: 16px; text-align: right; margin-right: 7px; }
```
